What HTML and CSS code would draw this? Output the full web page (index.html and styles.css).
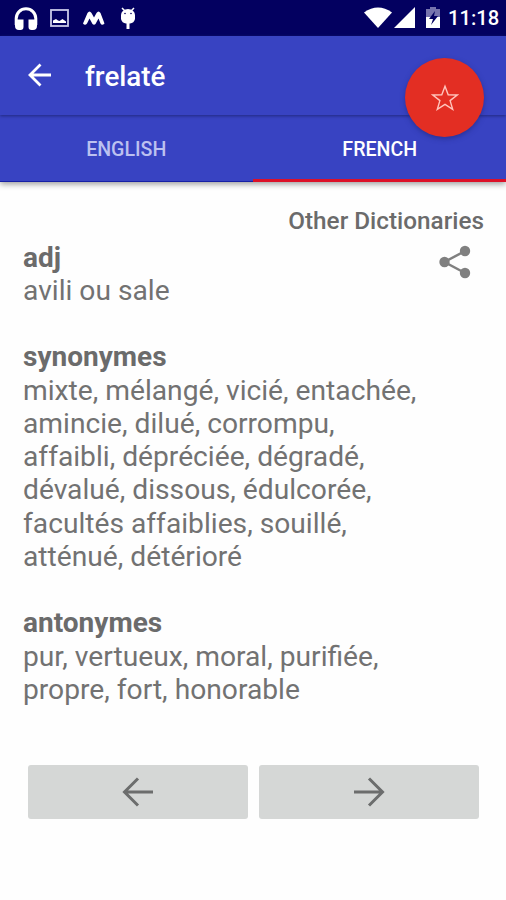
FILE: index.html
```html
<!DOCTYPE html>
<html lang="fr">
<head>
<meta charset="utf-8">
<title>frelaté</title>
<link rel="stylesheet" href="styles.css">
</head>
<body>
<div class="screen">
  <div class="status">
    <div class="status-left">
      <svg width="24" height="24" viewBox="0 0 24 24"><path d="M2.200 19V12.500a9.800 9.800 0 0 1 19.600 0V19" fill="none" stroke="#fff" stroke-width="3"/><path d="M1 13.500h8.500v7.500a3 3 0 0 1-3 3H5a4 4 0 0 1-4-4zM23 13.500h-8.500v7.500a3 3 0 0 0 3 3H19a4 4 0 0 0 4-4z" fill="#fff"/></svg>
      <svg class="picture" width="19" height="18" viewBox="0 0 19 18"><rect x="1" y="1" width="17" height="16" fill="none" stroke="#c9c9e8" stroke-width="1.800"/><path d="M3 14v-2.500l3-1.500 2 1.500 1.500.5 3-2 3.500 2.500V14z" fill="#fff"/></svg>
      <svg class="mark" width="22" height="16" viewBox="0 0 22 16"><path d="M0 13.500 4.500 3Q6.500 0 8.500 3l2.500 4.500L13.500 3Q15.500 0 17.500 3L21.500 13.500Q19 16 17.500 13.500L15.500 8.500 12.500 14Q11 15.500 9.500 14L6.500 8.500 4 13.500Q2 16 0 13.500z" fill="#fff"/></svg>
      <svg class="robot" width="16" height="23" viewBox="0 0 16 23"><path d="M2 1l3 3M14 1l-3 3" stroke="#fff" stroke-width="1.500"/><path d="M1 8a7 6 0 0 1 14 0v4q-1 4-5 4.500H6Q2 16 1 12z" fill="#fff"/><path d="M8 15v7" stroke="#fff" stroke-width="3"/><circle cx="5" cy="6.500" r=".8" fill="#030060"/><circle cx="11" cy="6.500" r=".8" fill="#030060"/></svg>
    </div>
    <div class="status-right">
      <svg width="28" height="21" viewBox="0 0 28 21"><path d="M0 5.500Q14-4.500 28 5.500L14 21z" fill="#fff"/></svg>
      <svg class="signal" width="21" height="21" viewBox="0 0 21 21"><path d="M21 0v21H0z" fill="#fff"/></svg>
      <svg class="battery" width="14" height="21" viewBox="0 0 14 21"><path d="M4 0h6v2h4v9H0V2h4z" fill="#7774ad"/><path d="M0 10h14v11H0z" fill="#fff"/><path d="M9 4 3 12h4l-2 6 7-9H8z" fill="#030060"/></svg>
      <span class="clock">11:18</span>
    </div>
  </div>
  <header class="toolbar">
    <svg width="24" height="24" viewBox="0 0 24 24"><path d="M23 12H2M12.500 1.500 2 12l10.500 10.500" fill="none" stroke="#fff" stroke-width="2.800"/></svg>
    <h1>frelaté</h1>
    <button class="favorite" aria-label="Favori"><svg width="28" height="28" viewBox="0 0 28 28"><path d="M14 2.200 17.200 10.700 26.200 11 19.100 16.600 21.700 25.400 14 20.300 6.300 25.400 8.900 16.600 1.800 11 10.800 10.700z" fill="none" stroke="#ffc5bd" stroke-width="1.400"/></svg></button>
  </header>
  <nav class="tabs"><a class="tab">ENGLISH</a><a class="tab active">FRENCH</a></nav>
  <main>
    <p class="other">Other Dictionaries</p>
    <div class="entry">
      <div class="text">
        <h2>adj</h2>
        <p>avili ou sale</p>
        <h2>synonymes</h2>
        <p>mixte, mélangé, vicié, entachée,<br>amincie, dilué, corrompu,<br>affaibli, dépréciée, dégradé,<br>dévalué, dissous, édulcorée,<br>facultés affaiblies, souillé,<br>atténué, détérioré</p>
        <h2>antonymes</h2>
        <p>pur, vertueux, moral, purifiée,<br>propre, fort, honorable</p>
      </div>
      <svg class="share" width="32" height="34" viewBox="0 0 32 34"><path d="M26 6 5.500 17 26 28" fill="none" stroke="#808080" stroke-width="2.500"/><g fill="#808080"><circle cx="26" cy="6" r="5.200"/><circle cx="5.500" cy="17" r="5.200"/><circle cx="26" cy="28" r="5.200"/></g></svg>
    </div>
    <div class="buttons">
      <button aria-label="Précédent"><svg width="32" height="30" viewBox="0 0 32 30"><path d="M31 15H2.500M16 1.500 2.500 15 16 28.500" fill="none" stroke="#6c6d6d" stroke-width="3"/></svg></button>
      <button aria-label="Suivant"><svg width="32" height="30" viewBox="0 0 32 30"><path d="M1 15h28.500M16 1.500 29.500 15 16 28.500" fill="none" stroke="#6c6d6d" stroke-width="3"/></svg></button>
    </div>
  </main>
</div>
</body>
</html>
```
FILE: styles.css
```css
* { box-sizing: border-box; }
body, h1, h2, p { margin: 0; }
body { background: #fefefe; font-family: Roboto, "Liberation Sans", sans-serif; color: #6b6b6b; }
svg { display: block; flex: none; }
button { border: 0; padding: 0; display: flex; align-items: center; justify-content: center; }
.screen { width: 506px; height: 900px; overflow: hidden; }
.status { height: 36px; background: #030060; display: flex; justify-content: space-between; padding: 0 8px 0 14px; }
.status-left, .status-right { display: flex; align-items: flex-start; }
.status-left { padding-top: 6px; }
.picture { margin: 3px 0 0 12px; }
.mark { margin: 4px 0 0 14px; }
.robot { margin: 1px 0 0 15px; }
.status-right { padding-top: 7px; }
.signal { margin-left: 2px; }
.battery { margin-left: 11px; }
.clock { margin: -1px 0 0 8px; color: #fff; font-size: 20.2px; line-height: 25px; font-weight: 500; width: 50px; white-space: nowrap; }
.toolbar { position: relative; height: 79px; background: #3843c2; display: flex; align-items: center; padding-left: 28px; box-shadow: 0 1px 3px #20287f; z-index: 1; }
.toolbar > svg { margin-top: -2px; }
h1 { margin-left: 33px; color: #fff; font-size: 27.8px; font-weight: 500; line-height: 34px; padding-top: 2px; }
.favorite { position: absolute; left: 405px; top: 22px; width: 79px; height: 79px; border-radius: 50%; background: #e32e23; box-shadow: 0 2px 5px #20287fa0; }
.tabs { display: flex; height: 67px; background: #3843c2; box-shadow: 0 2px 6px #0006; }
.tab { flex: 1; display: flex; align-items: center; justify-content: center; padding-top: 2px; font-size: 19.6px; font-weight: 500; color: #bcc1f0; border-bottom: 1px solid #1720a5; }
.active { padding-top: 4px; padding-left: 1px; color: #fff; border-bottom: 3px solid #dc1028; }
main { padding: 23px 23px 0; }
.other { font-size: 24.3px; line-height: 32px; font-weight: 500; text-align: right; margin-right: -1px; }
.entry { display: flex; justify-content: space-between; padding-top: 3.500px; }
.text { font-size: 28.2px; line-height: 33.25px; white-space: nowrap; }
.text p { color: #727272; }
h2 { font-size: 28px; line-height: inherit; font-weight: 700; }
p + h2 { margin-top: 33.25px; }
.share { margin: 4px 12px 0 0; }
.buttons { display: flex; gap: 11px; margin: 58.500px 4px 0 5px; }
.buttons button { flex: 1; height: 54px; background: #d5d7d6; border-radius: 3px; }
```
